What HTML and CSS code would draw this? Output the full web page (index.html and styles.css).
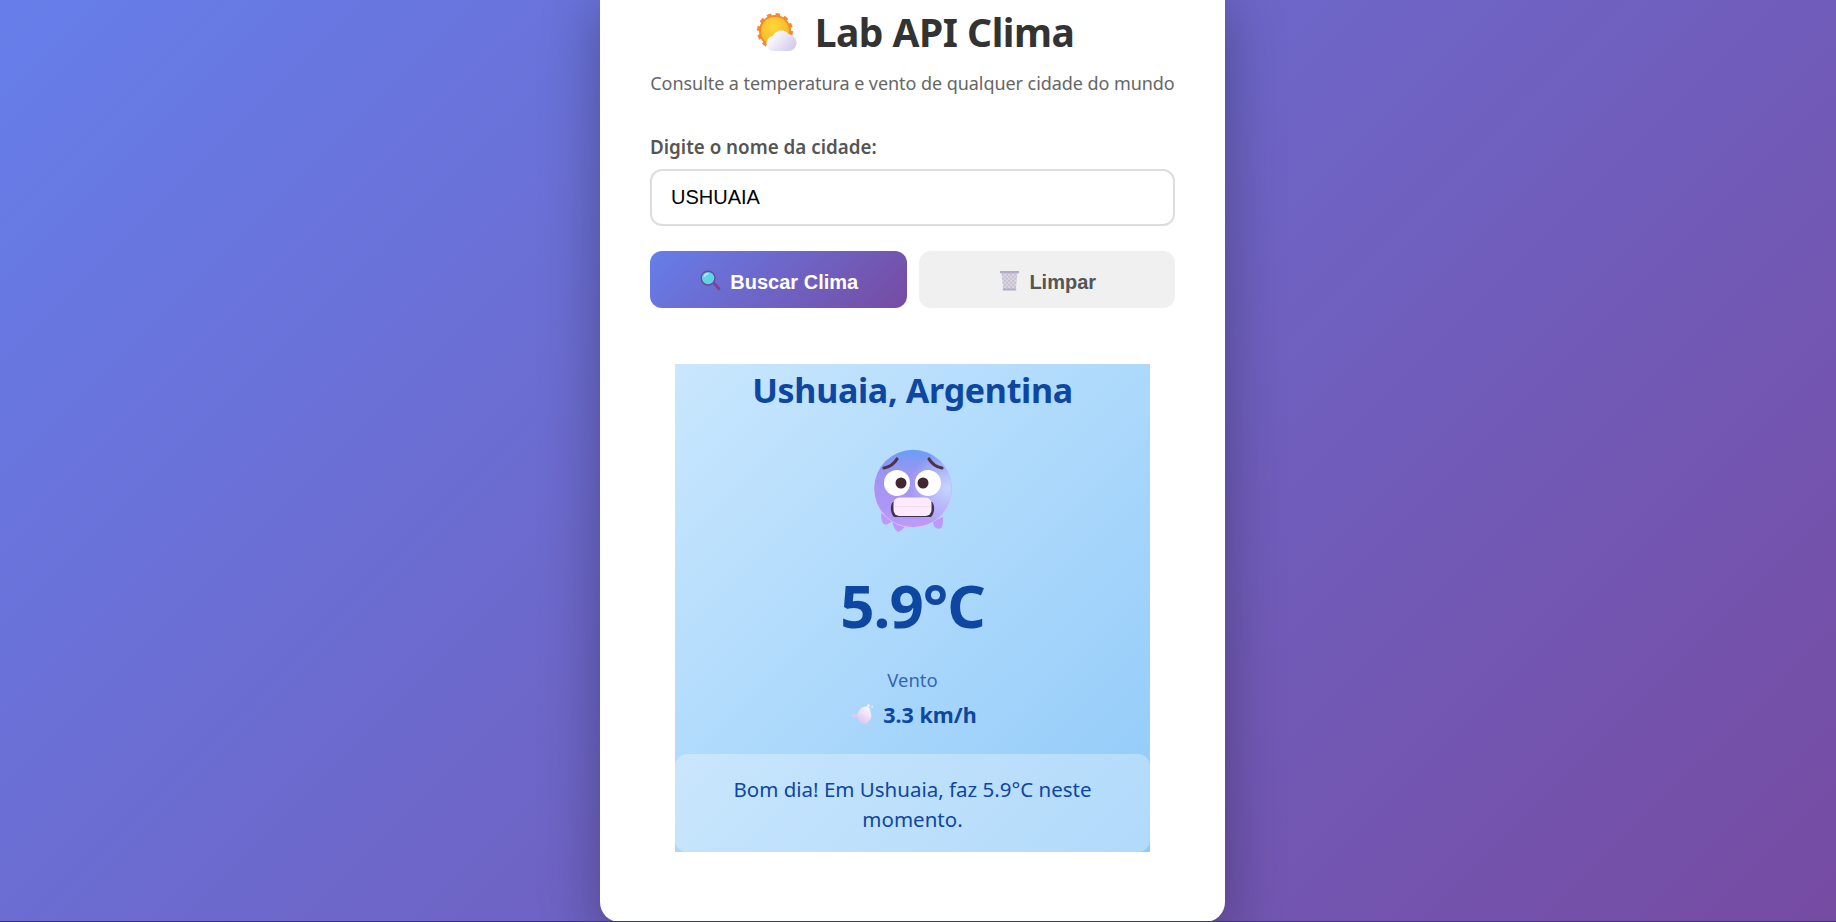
FILE: index.html
```html
<!DOCTYPE html>
<html lang="pt-BR">
<head>
  <meta charset="UTF-8">
  <title>Lab API Clima</title>
  <meta name="viewport" content="width=device-width, initial-scale=1">
  <link rel="stylesheet" href="styles.css">
</head>
<body>

  <div class="container">
    <h1 class="title">
      <svg class="title-icon" viewBox="0 0 40 40">
        <defs>
          <radialGradient id="sunFill" cx="0.45" cy="0.35" r="0.7">
            <stop offset="0" stop-color="#ffd83b"/>
            <stop offset="1" stop-color="#f9b324"/>
          </radialGradient>
          <linearGradient id="cloudFill" gradientUnits="userSpaceOnUse" x1="14" y1="20" x2="34" y2="38">
            <stop offset="0" stop-color="#ffffff"/>
            <stop offset="1" stop-color="#d3cbec"/>
          </linearGradient>
        </defs>
        <circle cx="18" cy="18" r="16" fill="#f58a2c"/>
        <circle cx="18" cy="18" r="16.500" fill="none" stroke="#f58a2c" stroke-width="3" stroke-dasharray="4.500 4.140"/>
        <circle cx="18" cy="18" r="14" fill="url(#sunFill)"/>
        <path fill="url(#cloudFill)" d="M17 38c-4.500 0-7.500-3.500-7.500-7.500 0-4 3-7 6.500-7.500 1.500-3.500 5-5.500 8.500-5.500 3 0 5.500 1.200 7 3.500 4.500.8 8 4.500 8 8.500 0 5-4 8.500-8.500 8.500z"/>
      </svg>
      <span>Lab API Clima</span>
    </h1>
    <p class="subtitle">Consulte a temperatura e vento de qualquer cidade do mundo</p>

    <label class="field-label" for="cidade">Digite o nome da cidade:</label>
    <input class="field-input" id="cidade" type="text" value="USHUAIA">

    <div class="buttons">
      <button class="btn btn-search">
        <svg class="btn-icon" viewBox="0 0 22 22">
          <path d="M13.500 14.500l2-2 5.500 6.300c.6.7.5 1.500-.1 2.100-.6.6-1.500.6-2.100 0z" fill="#8a3f8c"/>
          <circle cx="8.500" cy="8.500" r="8" fill="#6a4a9c"/>
          <circle cx="8.500" cy="8.500" r="6.500" fill="#5fd4e6"/>
          <path d="M4.500 7c.8-2 2.300-3 4.300-3" stroke="#b6f2f8" stroke-width="1.500" fill="none"/>
        </svg>
        <span>Buscar Clima</span>
      </button>
      <button class="btn btn-clear">
        <svg class="btn-icon" viewBox="0 0 22 22">
          <defs>
            <pattern id="trashMesh" width="3" height="3" patternUnits="userSpaceOnUse" patternTransform="rotate(45)">
              <rect width="3" height="3" fill="#dcd8e6"/>
              <path d="M0 0h3M0 0v3" stroke="#b5b0c4" stroke-width="1"/>
            </pattern>
          </defs>
          <path d="M2.500 2.500h17l-2 18.500h-13z" fill="url(#trashMesh)"/>
          <path d="M1 1h20v2.500H1zM4 19.500h14v2H4z" fill="#b2adc4"/>
        </svg>
        <span>Limpar</span>
      </button>
    </div>

    <div class="result">
      <h2 class="city">Ushuaia, Argentina</h2>
      <svg class="weather-icon" viewBox="0 0 80 86">
        <defs>
          <linearGradient id="faceFill" x1="0.5" y1="0" x2="0.5" y2="1">
            <stop offset="0" stop-color="#6a9ef5"/>
            <stop offset="0.3" stop-color="#9c94f3"/>
            <stop offset="0.7" stop-color="#ac96f6"/>
            <stop offset="1" stop-color="#bb9cfc"/>
          </linearGradient>
          <radialGradient id="faceShine" cx="0.95" cy="0.5" r="0.5">
            <stop offset="0" stop-color="#c4d6ff"/>
            <stop offset="1" stop-color="#c4d6ff" stop-opacity="0"/>
          </radialGradient>
        </defs>
        <path d="M8 64c0 5 1 10 3 11 2 1 5 0 8-3zM19 72c1 5 3 9 6 11 3-1 6-4 8-7zM60 72c0 3 1 6 3 7 2 1 5 1 6-1 1-3 1-6 1-10z" fill="#bb98fb"/>
        <circle cx="40" cy="40" r="39" fill="#f0c4f4"/>
        <circle cx="40" cy="39.500" r="38.800" fill="url(#faceFill)"/>
        <circle cx="40" cy="39.500" r="38.800" fill="url(#faceShine)"/>
        <path d="M11 19c6-1 10-4 13-9M69 19c-6-1-10-4-13-9" fill="none" stroke="#4f3348" stroke-width="3.200" stroke-linecap="round"/>
        <circle cx="24" cy="34" r="13" fill="#ffffff"/>
        <circle cx="55" cy="34" r="13" fill="#ffffff"/>
        <circle cx="28" cy="34" r="5.500" fill="#43262f"/>
        <circle cx="50" cy="34" r="5.500" fill="#43262f"/>
        <path d="M20 53h39c3 3 3 11-1 15H21c-4-4-4-12-1-15z" fill="#3f3149"/>
        <rect x="20.500" y="48.500" width="38" height="18.500" rx="6" fill="#fdeafb"/>
        <path d="M20.500 57.500h38" stroke="#e6cdea" stroke-width="0.600"/>
      </svg>
      <div class="temp">5.9°C</div>
      <div class="wind-label">Vento</div>
      <div class="wind-value">
        <svg class="wind-icon" viewBox="0 0 24 24">
          <defs>
            <linearGradient id="windFill" x1="0.8" y1="0" x2="0.3" y2="1">
              <stop offset="0" stop-color="#fbf9fe"/>
              <stop offset="1" stop-color="#dcc4f0"/>
            </linearGradient>
          </defs>
          <path d="M0 11h10v3.500H0z" fill="#dccdea"/>
          <path d="M14 3c4-1 7 2 6 6 2 3 1 8-2 10-2 3-6 4-8 2-3-1-4-4-3-6-2-3-1-7 2-9 1-2 3-3 5-3z" fill="url(#windFill)"/>
          <circle cx="18" cy="2" r="1.600" fill="#f2eef8"/>
          <circle cx="22" cy="3" r="1" fill="#f2eef8"/>
          <circle cx="17" cy="22" r="1" fill="#dccbec"/>
        </svg>
        <span>3.3 km/h</span>
      </div>
      <div class="message">Bom dia! Em Ushuaia, faz 5.9°C neste momento.</div>
    </div>
  </div>

</body>
</html>
```

FILE: styles.css
```css
html, body {
  height: 100%;
  overflow: hidden;
}

body {
  box-sizing: border-box;
  margin: 0;
  padding-right: 11px;
  border-bottom: 1px solid #3c3a52;
  background: linear-gradient(135deg, #667eea 0%, #764ba2 100%);
  font-family: "Noto Sans", sans-serif;
}

.container {
  box-sizing: border-box;
  width: 625px;
  height: 942px;
  margin: -20px auto 0;
  padding: 29px 50px 0;
  background: white;
  border-radius: 20px;
  box-shadow: 0 20px 60px rgba(0, 0, 0, 0.3);
}

.title {
  display: flex;
  justify-content: center;
  align-items: center;
  gap: 18px;
  height: 44px;
  margin: 0;
  padding-left: 6px;
  font-size: 39px;
  font-weight: 700;
  letter-spacing: -0.5px;
  color: #333;
}

.title-icon {
  width: 40px;
  height: 40px;
  margin-top: 3px;
}

.subtitle {
  margin: 18px 0 0;
  font-size: 18px;
  line-height: 24px;
  letter-spacing: -0.06px;
  text-align: center;
  white-space: nowrap;
  color: #666;
}

.field-label {
  display: block;
  margin-top: 40px;
  font-size: 18.800px;
  line-height: 24px;
  font-weight: 600;
  color: #555;
}

.field-input {
  display: block;
  box-sizing: border-box;
  width: 100%;
  height: 57px;
  margin-top: 10px;
  padding: 0 19px;
  border: 2px solid #ddd;
  border-radius: 12px;
  outline: none;
  font-family: "Liberation Sans", Arial, sans-serif;
  font-size: 20px;
  color: #000;
}

.buttons {
  display: flex;
  gap: 12px;
  margin-top: 25px;
}

.btn {
  display: flex;
  justify-content: center;
  align-items: center;
  gap: 9px;
  flex: 1;
  height: 57px;
  padding: 5px 0 0 2px;
  border: none;
  border-radius: 12px;
  font-family: "Liberation Sans", Arial, sans-serif;
  font-size: 20px;
  font-weight: bold;
}

.btn-search {
  background: linear-gradient(135deg, #667eea 0%, #764ba2 100%);
  color: white;
}

.btn-clear {
  background: #f0f0f0;
  color: #555;
}

.btn-icon {
  width: 21px;
  height: 21px;
  margin-top: -4px;
}

.result {
  box-sizing: border-box;
  display: flex;
  flex-direction: column;
  align-items: center;
  height: 488px;
  margin: 56px 25px 0;
  background: linear-gradient(135deg, #c9e7fe 0%, #90caf9 100%);
  color: #0d47a1;
}

.city {
  margin: 3px 0 0;
  font-size: 34px;
  line-height: 46px;
  font-weight: 700;
  letter-spacing: -0.3px;
}

.weather-icon {
  width: 80px;
  height: 86px;
  margin-top: 36px;
}

.temp {
  margin-top: 30px;
  font-size: 60px;
  line-height: 80px;
  font-weight: 700;
  letter-spacing: -1px;
}

.wind-label {
  margin-top: 23px;
  font-size: 18.500px;
  line-height: 24px;
  color: #3566b5;
}

.wind-value {
  display: flex;
  align-items: center;
  gap: 9px;
  margin-top: 9px;
  padding-left: 4px;
  font-size: 21.500px;
  line-height: 28px;
  font-weight: 700;
}

.wind-icon {
  width: 22px;
  height: 24px;
}

.message {
  box-sizing: border-box;
  width: 100%;
  margin-top: auto;
  height: 98px;
  padding: 20px 45px 0;
  border-radius: 12px;
  background: rgba(255, 255, 255, 0.3);
  font-size: 20.500px;
  line-height: 30px;
  text-align: center;
}
```
